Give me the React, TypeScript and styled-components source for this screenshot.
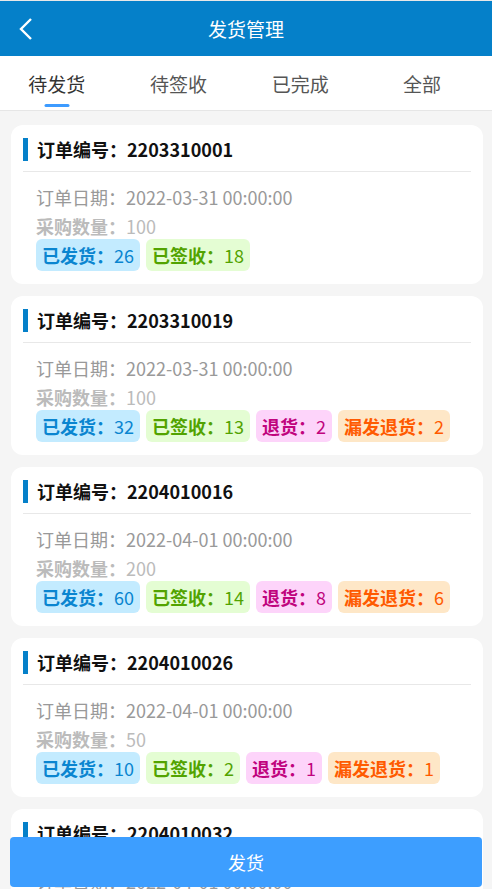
import React, { useState } from "react";
import styled, { createGlobalStyle } from "styled-components";

const GlobalStyle = createGlobalStyle`
  html, body {
    margin: 0;
    padding: 0;
    background: #f5f5f5;
    font-family: "Noto Sans CJK SC", "Noto Sans", sans-serif;
  }
`;

const Page = styled.div`
  height: 100vh;
  background: #f5f5f5;
  border-top: 1px solid #e8e8e8;
  box-sizing: border-box;
  overflow: hidden;
`;

const Header = styled.div`
  position: relative;
  height: 55px;
  background: #0580c9;
  display: flex;
  align-items: center;
  justify-content: center;
  color: #fff;
  font-size: 19px;
`;

const Back = styled.button`
  position: absolute;
  left: 16px;
  top: 14px;
  width: 20px;
  height: 28px;
  padding: 0;
  border: none;
  background: transparent;
  display: flex;
  align-items: center;
  justify-content: center;
`;

const Tabs = styled.div`
  display: flex;
  height: 55px;
  background: #fff;
  border-bottom: 1px solid #e6e6e6;
  padding: 0 9px 0 0;
  margin-left: -4px;
  width: calc(100% + 4px);
  box-sizing: border-box;
`;

const Tab = styled.div<{ $active?: boolean }>`
  position: relative;
  flex: 1;
  display: flex;
  justify-content: center;
  align-items: center;
  font-size: 19px;
  color: ${(p) => (p.$active ? "#333" : "#555")};
  cursor: pointer;

  &::after {
    content: "";
    display: ${(p) => (p.$active ? "block" : "none")};
    position: absolute;
    bottom: 3px;
    left: 50%;
    transform: translateX(-50%);
    width: 25px;
    height: 3px;
    border-radius: 2px;
    background: #3d9bff;
  }
`;

const List = styled.div`
  display: flex;
  flex-direction: column;
  gap: 12px;
  padding: 14px 9px 80px 11px;
`;

const Card = styled.div`
  background: #fff;
  border-radius: 12px;
  padding: 12px 12px 13px 12px;
`;

const CardTitle = styled.div`
  display: flex;
  align-items: center;
  gap: 9px;
  height: 24px;
  padding-bottom: 10px;
  border-bottom: 1px solid #e8e8e8;
  font-size: 18px;
  font-weight: bold;
  color: #111;

  &::before {
    content: "";
    width: 5px;
    height: 23px;
    background: #0580c9;
  }
`;

const Body = styled.div`
  padding: 11px 0 0 13px;
`;

const Line = styled.div<{ $bold?: boolean }>`
  font-size: 18px;
  line-height: 29px;
  color: ${(p) => (p.$bold ? "#bbb" : "#999")};

  b {
    font-weight: bold;
  }
`;

const Tags = styled.div`
  display: flex;
  gap: 6px;
  margin-top: -2px;
`;

const palette = {
  blue: { bg: "#c3ebff", fg: "#0a85d0" },
  green: { bg: "#e4fdd3", fg: "#52a300" },
  pink: { bg: "#fdd4fa", fg: "#c0047e" },
  orange: { bg: "#fee7c7", fg: "#ff5a00" },
};

type Tone = keyof typeof palette;

const Tag = styled.div<{ $tone: Tone }>`
  height: 32px;
  padding: 0 6px;
  border-radius: 6px;
  display: flex;
  align-items: center;
  font-size: 18px;
  background: ${(p) => palette[p.$tone].bg};
  color: ${(p) => palette[p.$tone].fg};

  b {
    font-weight: bold;
  }
`;

const Footer = styled.div`
  position: fixed;
  left: 10px;
  right: 10px;
  bottom: 2px;
`;

const ShipButton = styled.button`
  width: 100%;
  height: 50px;
  border: none;
  border-radius: 4px;
  background: #3d9eff;
  color: #fff;
  font-size: 18px;
  font-family: inherit;
`;

type Order = {
  no: string;
  date: string;
  qty: number;
  tags: { label: string; value: number; tone: Tone }[];
};

const orders: Order[] = [
  {
    no: "2203310001",
    date: "2022-03-31 00:00:00",
    qty: 100,
    tags: [
      { label: "已发货", value: 26, tone: "blue" },
      { label: "已签收", value: 18, tone: "green" },
    ],
  },
  {
    no: "2203310019",
    date: "2022-03-31 00:00:00",
    qty: 100,
    tags: [
      { label: "已发货", value: 32, tone: "blue" },
      { label: "已签收", value: 13, tone: "green" },
      { label: "退货", value: 2, tone: "pink" },
      { label: "漏发退货", value: 2, tone: "orange" },
    ],
  },
  {
    no: "2204010016",
    date: "2022-04-01 00:00:00",
    qty: 200,
    tags: [
      { label: "已发货", value: 60, tone: "blue" },
      { label: "已签收", value: 14, tone: "green" },
      { label: "退货", value: 8, tone: "pink" },
      { label: "漏发退货", value: 6, tone: "orange" },
    ],
  },
  {
    no: "2204010026",
    date: "2022-04-01 00:00:00",
    qty: 50,
    tags: [
      { label: "已发货", value: 10, tone: "blue" },
      { label: "已签收", value: 2, tone: "green" },
      { label: "退货", value: 1, tone: "pink" },
      { label: "漏发退货", value: 1, tone: "orange" },
    ],
  },
  {
    no: "2204010032",
    date: "2022-04-01 00:00:00",
    qty: 100,
    tags: [
      { label: "已发货", value: 12, tone: "blue" },
      { label: "已签收", value: 8, tone: "green" },
    ],
  },
];

const tabs = ["待发货", "待签收", "已完成", "全部"];

export default function App() {
  const [active, setActive] = useState(0);

  return (
    <Page>
      <GlobalStyle />
      <Header>
        <Back aria-label="返回">
          <svg width="14" height="24" viewBox="0 0 14 24" fill="none">
            <path d="M12 2L2 12l10 10" stroke="#fff" strokeWidth="2.4" strokeLinejoin="miter" />
          </svg>
        </Back>
        发货管理
      </Header>
      <Tabs>
        {tabs.map((t, i) => (
          <Tab key={t} $active={i === active} onClick={() => setActive(i)}>
            {t}
          </Tab>
        ))}
      </Tabs>
      <List>
        {orders.map((o) => (
          <Card key={o.no}>
            <CardTitle>订单编号：{o.no}</CardTitle>
            <Body>
              <Line>订单日期：{o.date}</Line>
              <Line $bold>
                <b>采购数量：</b>
                {o.qty}
              </Line>
              <Tags>
                {o.tags.map((t) => (
                  <Tag key={t.label} $tone={t.tone}>
                    <b>{t.label}：</b>
                    {t.value}
                  </Tag>
                ))}
              </Tags>
            </Body>
          </Card>
        ))}
      </List>
      <Footer>
        <ShipButton>发货</ShipButton>
      </Footer>
    </Page>
  );
}
